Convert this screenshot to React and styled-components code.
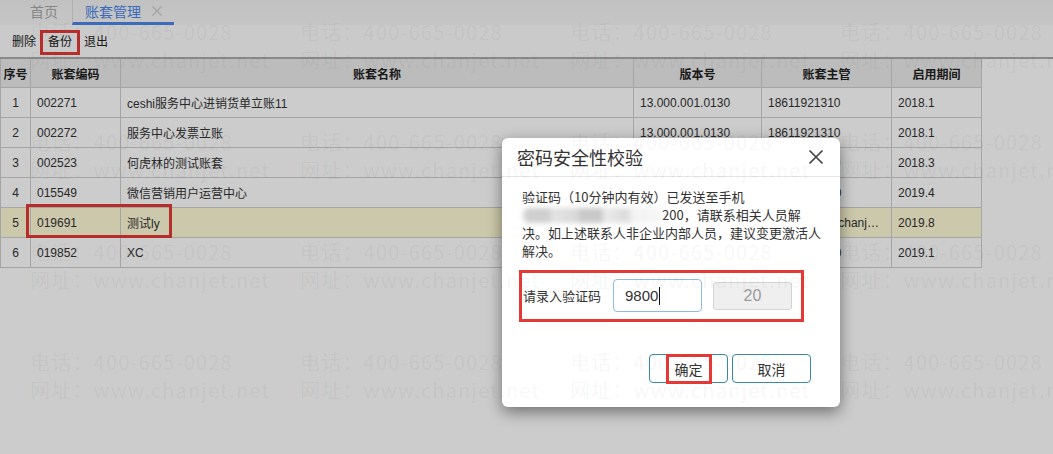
import React from "react";
import styled, { createGlobalStyle } from "styled-components";

const GlobalStyle = createGlobalStyle`
  html, body {
    margin: 0;
    padding: 0;
    background: #fff;
  }
  body {
    font-family: "Liberation Sans", "Noto Sans CJK SC", sans-serif;
    color: #333;
  }
`;

const Page = styled.div`
  position: relative;
  width: 1053px;
  height: 454px;
  overflow: hidden;
  background: #fff;
`;

const TabBar = styled.div`
  display: flex;
  height: 25px;
  padding-left: 16px;
  background: linear-gradient(#f2f2f2, #f7f7f7);
`;

const Tab = styled.div`
  display: flex;
  align-items: center;
  height: 22px;
  padding: 0 ${(p) => (p.active ? "11px 0 12px" : "14px")};
  font-size: 14px;
  color: ${(p) => (p.active ? "#4a86e8" : "#a8a8a8")};
  border-bottom: 3px solid ${(p) => (p.active ? "#4a86e8" : "transparent")};
  border-left: ${(p) => (p.active ? "1px solid #dcdcdc" : "none")};
  font-family: "Noto Sans CJK SC", sans-serif;
`;

const TabClose = styled.svg`
  margin-left: 10px;
  width: 12px;
  height: 12px;
`;

const Toolbar = styled.div`
  display: flex;
  align-items: center;
  gap: 12px;
  height: 32px;
  padding-left: 12px;
  background: #fdfdfd;
  border-bottom: 2px solid #acacac;
`;

const ToolButton = styled.span`
  position: relative;
  font-size: 12px;
  line-height: 20px;
  color: #222;
  font-family: "Noto Sans CJK SC", sans-serif;

  &::after {
    content: "";
    display: ${(p) => (p.marked ? "block" : "none")};
    position: absolute;
    left: -8px;
    right: -8px;
    top: -1px;
    bottom: -4px;
    border: 3px solid #e53935;
  }
`;

const TableWrap = styled.div`
  position: relative;
  width: 981px;
`;

const Table = styled.table`
  width: 981px;
  border-collapse: collapse;
  table-layout: fixed;
  font-size: 12px;
  font-family: "Liberation Sans", "Noto Sans CJK SC", sans-serif;
`;

const Th = styled.th`
  height: 28px;
  padding: 0;
  background: #ececec;
  border: 1px solid #cfcfcf;
  border-top: none;
  font-weight: bold;
  color: #222;
  text-align: center;
  font-family: "Noto Sans CJK SC", sans-serif;
`;

const Row = styled.tr`
  background: ${(p) => (p.selected ? "#fffad6" : "#fff")};
`;

const Td = styled.td`
  height: 29px;
  padding: 0 6px;
  border: 1px solid #cfcfcf;
  color: #333;
  text-align: ${(p) => (p.center ? "center" : "left")};
  white-space: nowrap;
  overflow: hidden;
  text-overflow: ellipsis;
`;

const RowMark = styled.div`
  position: absolute;
  left: 26px;
  top: 145px;
  width: 140px;
  height: 28px;
  border: 3px solid #e53935;
  pointer-events: none;
`;

const Backdrop = styled.div`
  position: absolute;
  inset: 0;
  background: rgba(0, 0, 0, 0.2);
`;

const Modal = styled.div`
  position: absolute;
  left: 502px;
  top: 138px;
  width: 338px;
  height: 269px;
  display: flex;
  flex-direction: column;
  background: #fff;
  border-radius: 6px;
  box-shadow: 0 5px 15px rgba(0, 0, 0, 0.45);
  font-family: "Noto Sans CJK SC", sans-serif;
`;

const ModalHeader = styled.div`
  display: flex;
  align-items: center;
  justify-content: space-between;
  height: 38px;
  padding: 0 16px 0 15px;
  border-bottom: 1px solid #e5e5e5;
`;

const ModalTitle = styled.div`
  font-size: 18px;
  color: #333;
`;

const CloseIcon = styled.svg`
  width: 16px;
  height: 16px;
`;

const ModalBody = styled.div`
  padding: 11px 10px 0 20px;
  font-size: 13px;
  line-height: 18px;
  color: #333;
`;

const Message = styled.p`
  margin: 0;
  white-space: nowrap;
`;

const Masked = styled.span`
  display: inline-block;
  width: 140px;
  height: 15px;
  vertical-align: -3px;
  border-radius: 7px;
  filter: blur(2.5px);
  background: linear-gradient(
    90deg,
    #f0f0f0 0,
    #cfcfcf 4px,
    #cfcfcf 28px,
    #e4e4e4 30px,
    #d8d8d8 56px,
    #c9c9c9 58px,
    #c9c9c9 80px,
    #ececec 82px,
    #dadada 106px,
    #f3f3f3 110px,
    #f6f6f6 140px
  );
`;

const CodeBox = styled.div`
  display: inline-flex;
  align-items: center;
  margin: 10px 0 0 -3px;
  padding: 6px 9px 7px 1px;
  border: 3px solid #e53935;
`;

const Label = styled.span`
  width: 78px;
  font-size: 13px;
  color: #333;
  white-space: nowrap;
`;

const CodeField = styled.div`
  display: flex;
  align-items: center;
  box-sizing: border-box;
  width: 89px;
  height: 33px;
  margin-left: 12px;
  padding-left: 11px;
  border: 1px solid #8fbbe2;
  border-radius: 4px;
  font-size: 15px;
  font-family: "Liberation Sans", sans-serif;
  color: #333;
`;

const Caret = styled.span`
  display: inline-block;
  width: 1px;
  height: 18px;
  margin-left: 1px;
  background: #111;
`;

const CountButton = styled.button`
  box-sizing: border-box;
  width: 79px;
  height: 28px;
  margin-left: 11px;
  padding: 0;
  background: #efefef;
  border: 1px solid #d3d3d3;
  border-radius: 3px;
  color: #9a9a9a;
  font-size: 16px;
  font-family: "Liberation Sans", sans-serif;
`;

const ModalFooter = styled.div`
  display: flex;
  justify-content: flex-end;
  gap: 4px;
  margin-top: auto;
  padding: 0 29px 24px 0;
`;

const FooterButton = styled.button`
  display: flex;
  align-items: center;
  justify-content: center;
  box-sizing: border-box;
  width: 79px;
  height: 29px;
  padding: 0;
  background: #fff;
  border: 1px solid #3a8aa5;
  border-radius: 4px;
  font-size: 14px;
  color: #333;
  font-family: "Noto Sans CJK SC", sans-serif;
`;

const Marked = styled.span`
  display: block;
  padding: 0 6px;
  line-height: 24px;
  border: 3px solid #e53935;
`;

const Watermark = styled.div`
  position: absolute;
  inset: 0;
  display: grid;
  grid-template-columns: repeat(4, 270px);
  grid-auto-rows: 110px;
  padding: 18px 0 0 30px;
  pointer-events: none;
  font-family: "Noto Sans CJK SC", sans-serif;
  font-size: 20px;
  line-height: 28px;
  letter-spacing: 1.2px;
  color: rgba(0, 0, 0, 0.05);
  white-space: nowrap;
`;

const columns = [
  { title: "序号", width: 30 },
  { title: "账套编码", width: 90 },
  { title: "账套名称", width: 513 },
  { title: "版本号", width: 128 },
  { title: "账套主管", width: 130 },
  { title: "启用期间", width: 90 },
];

const rows = [
  ["1", "002271", "ceshi服务中心进销货单立账11", "13.000.001.0130", "18611921310", "2018.1"],
  ["2", "002272", "服务中心发票立账", "13.000.001.0130", "18611921310", "2018.1"],
  ["3", "002523", "何虎林的测试账套", "13.000.001.0130", "18611921310", "2018.3"],
  ["4", "015549", "微信营销用户运营中心", "13.000.001.0130", "13810528650", "2019.4"],
  ["5", "019691", "测试ly", "13.000.001.0130", "liyang0908@chanjet.com", "2019.8"],
  ["6", "019852", "XC", "13.000.001.0130", "13910282210", "2019.1"],
];

function App() {
  return (
    <Page>
      <GlobalStyle />
      <TabBar>
        <Tab>首页</Tab>
        <Tab active>
          账套管理
          <TabClose viewBox="0 0 12 12">
            <path d="M1.5 1.5L10.5 10.5M10.5 1.5L1.5 10.5" stroke="#d0d0d0" strokeWidth="1.5" />
          </TabClose>
        </Tab>
      </TabBar>
      <Toolbar>
        <ToolButton>删除</ToolButton>
        <ToolButton marked>备份</ToolButton>
        <ToolButton>退出</ToolButton>
      </Toolbar>
      <TableWrap>
        <Table>
          <colgroup>
            {columns.map((c) => (
              <col key={c.title} style={{ width: c.width }} />
            ))}
          </colgroup>
          <thead>
            <tr>
              {columns.map((c) => (
                <Th key={c.title}>{c.title}</Th>
              ))}
            </tr>
          </thead>
          <tbody>
            {rows.map((r) => (
              <Row key={r[0]} selected={r[0] === "5"}>
                {r.map((cell, i) => (
                  <Td key={i} center={i === 0}>
                    {cell}
                  </Td>
                ))}
              </Row>
            ))}
          </tbody>
        </Table>
        <RowMark />
      </TableWrap>

      <Backdrop />

      <Modal>
        <ModalHeader>
          <ModalTitle>密码安全性校验</ModalTitle>
          <CloseIcon viewBox="0 0 16 16">
            <path d="M1.5 1.5L14.5 14.5M14.5 1.5L1.5 14.5" stroke="#444" strokeWidth="1.7" />
          </CloseIcon>
        </ModalHeader>
        <ModalBody>
          <Message>验证码（10分钟内有效）已发送至手机</Message>
          <Message>
            <Masked />
            200，请联系相关人员解
          </Message>
          <Message>决。如上述联系人非企业内部人员，建议变更激活人</Message>
          <Message>解决。</Message>
          <CodeBox>
            <Label>请录入验证码</Label>
            <CodeField>
              9800
              <Caret />
            </CodeField>
            <CountButton disabled>20</CountButton>
          </CodeBox>
        </ModalBody>
        <ModalFooter>
          <FooterButton>
            <Marked>确定</Marked>
          </FooterButton>
          <FooterButton>取消</FooterButton>
        </ModalFooter>
      </Modal>

      <Watermark>
        {Array.from({ length: 16 }).map((_, i) => (
          <div key={i}>
            <div>电话：400-665-0028</div>
            <div>网址：www.chanjet.net</div>
          </div>
        ))}
      </Watermark>
    </Page>
  );
}

export default App;
